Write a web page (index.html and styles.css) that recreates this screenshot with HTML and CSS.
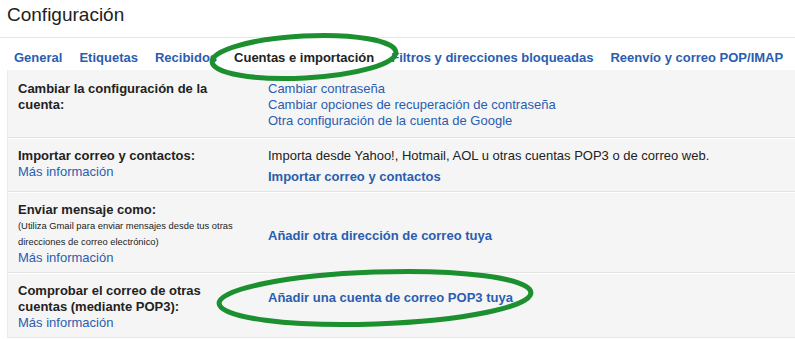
FILE: index.html
```html
<!DOCTYPE html>
<html>
	<head>
		<meta charset="utf-8">
		<title>Configuración</title>
		<link rel="stylesheet" href="styles.css">
	</head>
	<body>
		<div class="page">
			<h1 class="title">Configuración</h1>
			<div class="tabs">
				<a href="#">General</a>
				<a href="#">Etiquetas</a>
				<a href="#">Recibidos</a>
				<a href="#" class="current">Cuentas e importación</a>
				<a href="#">Filtros y direcciones bloqueadas</a>
				<a href="#">Reenvío y correo POP/IMAP</a>
			</div>
			<div class="panel">
				<div class="row">
					<div class="label">
						<b>Cambiar la configuración de la cuenta:</b>
					</div>
					<div class="value">
						<a href="#">Cambiar contraseña</a>
						<a href="#">Cambiar opciones de recuperación de contraseña</a>
						<a href="#">Otra configuración de la cuenta de Google</a>
					</div>
				</div>
				<div class="row">
					<div class="label">
						<b>Importar correo y contactos:</b>
						<a href="#">Más información</a>
					</div>
					<div class="value">
						<span>Importa desde Yahoo!, Hotmail, AOL u otras cuentas POP3 o de correo web.</span>
						<a href="#" class="action gap">Importar correo y contactos</a>
					</div>
				</div>
				<div class="row">
					<div class="label">
						<b>Enviar mensaje como:</b>
						<span class="small">(Utiliza Gmail para enviar mensajes desde tus otras direcciones de correo electrónico)</span>
						<a href="#">Más información</a>
					</div>
					<div class="value send">
						<a href="#" class="action">Añadir otra dirección de correo tuya</a>
					</div>
				</div>
				<div class="row last">
					<div class="label">
						<b>Comprobar el correo de otras cuentas (mediante POP3):</b>
						<a href="#">Más información</a>
					</div>
					<div class="value pop">
						<a href="#" class="action">Añadir una cuenta de correo POP3 tuya</a>
					</div>
				</div>
			</div>
			<!-- marcas verdes dibujadas encima -->
			<svg class="marks" width="795" height="339" viewBox="0 0 795 339">
				<ellipse cx="304" cy="57" rx="92" ry="21" transform="rotate(-3 304 57)"/>
				<ellipse cx="375" cy="298" rx="156" ry="26" transform="rotate(-2 375 298)"/>
			</svg>
		</div>
	</body>
</html>
```

FILE: styles.css
```css
*{
	padding: 0;
	margin: 0;
	box-sizing: border-box;
}
body{
	font-family: "Liberation Sans", Arial, sans-serif;
	font-size: 13px;
	line-height: 16px;
	color: #222;
	background: #fff;
}
a{
	color: #2a5db0;
	text-decoration: none;
}
.page{
	position: relative;
	width: 795px;
	height: 339px;
	overflow: hidden;
}
.title{
	height: 38px;
	padding: 4px 7px 0;
	font-size: 19px;
	line-height: 22px;
	font-weight: normal;
	color: #222;
	border-bottom: 1px solid #e5e5e5;
}
.tabs{
	display: flex;
	gap: 17px;
	height: 32px;
	padding: 12px 14px 0;
	white-space: nowrap;
}
.tabs a{
	font-weight: bold;
}
.tabs a.current{
	color: #222;
}
.panel{
	margin-left: 7px;
	background: #f5f5f5;
	border-left: 1px solid #ebebeb;
	border-bottom: 1px solid #e8e8e8;
}
.row{
	display: grid;
	grid-template-columns: 230px 1fr;
	column-gap: 20px;
	padding: 10px 10px 6px;
	border-bottom: 1px solid #e3e3e3;
	box-shadow: 0 1px 0 #fff;
}
.row:first-child{
	padding-top: 11px;
	padding-bottom: 8px;
}
.row.last{
	border-bottom: 0;
	box-shadow: none;
}
.label,
.value{
	display: flex;
	flex-direction: column;
	align-items: flex-start;
}
.label b{
	font-weight: bold;
}
.small{
	font-size: 9.4px;
	line-height: 16px;
}
.action{
	font-weight: bold;
}
.gap{
	margin-top: 5px;
}
.send{
	padding-top: 26px;
}
.pop{
	padding-top: 7px;
}
.marks{
	position: absolute;
	left: 0;
	top: 0;
	pointer-events: none;
}
.marks ellipse{
	fill: none;
	stroke: #1c8f2f;
	stroke-width: 5;
}
```
